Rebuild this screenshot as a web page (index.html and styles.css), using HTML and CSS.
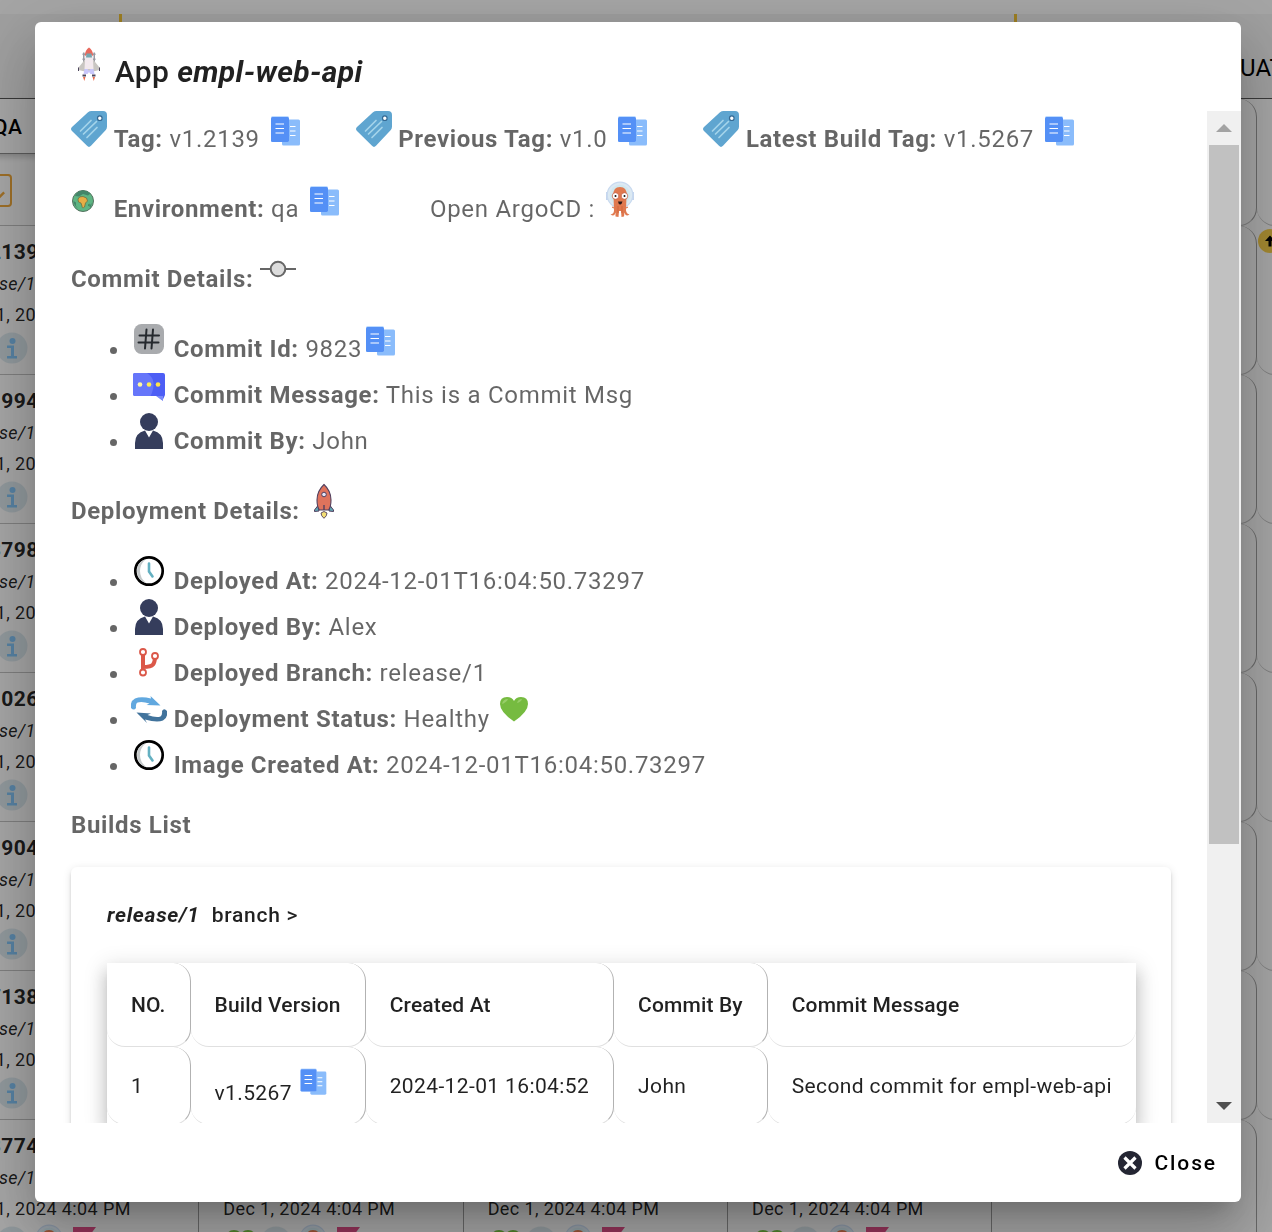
FILE: index.html
```html
<!DOCTYPE html>
<html lang="en">
<head>
<meta charset="utf-8">
<meta name="viewport" content="width=device-width, initial-scale=1">
<title>App empl-web-api</title>
<link rel="stylesheet" href="styles.css">
</head>
<body>
<svg class="sprite" aria-hidden="true">
  <symbol id="tag" viewBox="0 0 36 36">
    <path fill="#5fa5d0" d="M17 1.200Q18.500 0 20.500 0H32Q36 0 36 4V15.500Q36 17.500 34.800 19L20 34.800Q18 37 16 34.800L1 20Q-1 18 1 16Z"/>
    <circle cx="28.800" cy="7.200" r="2.300" fill="#fff" stroke="#356a94" stroke-width="1.200"/>
    <path stroke="#a4d4ea" stroke-width="1.700" stroke-linecap="round" d="M9.500 20 20 9.500M12.500 23 25.500 10.500M16 26.500 26 16.500"/>
  </symbol>
  <symbol id="copy" viewBox="0 0 36 36">
    <rect x="15" y="8.500" width="18" height="26" rx="1.500" fill="#8abcfb"/>
    <rect x="4" y="5" width="18" height="26" rx="1.500" fill="#bfdcff"/>
    <rect x="4" y="6" width="18" height="25" rx="1.500" fill="#5490f6"/>
    <path stroke="#fff" stroke-width="1.200" d="M8.500 13H17M8.500 17.500H17M8.500 22H17M23 15.500H28.500M23 20H28.500M23 24.500H28.500"/>
  </symbol>
  <symbol id="shuttle" viewBox="0 0 36 36">
    <path fill="#9a9aa4" d="M12 6.500h1.500v14H12zM22.500 6.500H24v14h-1.500zM11.500 7.500h3v1.500h-3zM21.500 7.500h3v1.500h-3zM11.500 12.500h3v1.500h-3zM21.500 12.500h3v1.500h-3z"/>
    <path fill="#c9c6c2" d="M14 13.500 7.500 21.500v2.500L16 26h4l8.500-2V21.500L22 13.500Z"/>
    <path fill="#f3e9ee" d="M14.300 9Q14.300 4 18 1.500 21.700 4 21.700 9L22.500 23h-9Z"/>
    <path fill="#e8695d" d="M13.800 10Q14 4 18 1.500 22 4 22.200 10Q18 7.500 13.800 10Z"/>
    <path fill="#75a6b0" d="M15.500 7.500h5l.5 4h-6z"/>
    <path fill="#c9c7fb" d="M13.500 23h3l1.500 2 1.500-2h3l1 5h-4L18 26l-1.500 2h-4z"/>
    <path fill="#4c455c" d="M7 21.500h1V25H7zM28 21.500h1V25h-1zM11.500 28.500h3.500v2h-3.500zM21 28.500h3.500v2H21z"/>
    <path fill="#ea6d50" d="M12 31h2.500l-1.200 4zM21.500 31H24l-1.200 4z"/>
  </symbol>
  <symbol id="globe" viewBox="0 0 36 36">
    <circle cx="12" cy="20" r="10.500" fill="#5eb583" stroke="#55725f" stroke-width="1"/>
    <path fill="#438669" d="M8 10.500Q14 8 19.500 12.500L17 14.500 12 13 8 15.500 4 15Q5 12 8 10.500ZM2.500 20 5 21.500 5 25 7 27.500Q3 25 2.500 20ZM19 24l2-2-2 6z"/>
    <path fill="#e7ae45" stroke="#6d6539" stroke-width=".7" d="M7 18Q8 15 12 15.500L15.500 17 16.500 20 14.500 22 13.500 26Q11 28 11 25L10 22Q6.500 22 7 18Z"/>
    <path fill="#33704f" d="M17 24l1.500-1.500v3.500z"/>
  </symbol>
  <symbol id="argo" viewBox="0 0 36 36">
    <path fill="#c5d6ee" d="M4 11h3v8H4zM29 11h3v8h-3z"/>
    <circle cx="18" cy="14" r="12.800" fill="#dce9f3" stroke="#c8d9ef" stroke-width="1.200"/>
    <circle cx="18" cy="14" r="10.300" fill="#d0e7ee"/>
    <path fill="#e0794f" d="M11.500 14Q11 6 18 6T24.500 14L24 29.500Q24.500 33 27.500 33.500 23.500 36 22.500 31.500L22 35.500 19.500 36 19 30H17L16.500 36 13.500 35.500 13.500 31.500Q12.500 36 8.500 33.500 12 33 12 29.500Z"/>
    <path stroke="#d2673d" fill="none" d="M12 27 10 26M24 27l2-1M16 25v7M20 25v7"/>
    <circle cx="13.500" cy="15" r="3.300" fill="#fff" stroke="#bd5536" stroke-width=".7"/>
    <circle cx="22.500" cy="15" r="3.300" fill="#fff" stroke="#bd5536" stroke-width=".7"/>
    <circle cx="13.500" cy="15" r="1" fill="#111"/><circle cx="22.500" cy="15" r="1" fill="#111"/>
    <path fill="#2b1a1a" d="M16 20.500h4.500Q19.500 24 18 23.500 16.500 23.500 16 20.500Z"/>
  </symbol>
  <symbol id="commit" viewBox="0 0 36 36">
    <path stroke="#666" stroke-width="2" d="M0 18h36"/>
    <circle cx="18" cy="18" r="7.300" fill="#dcdcdc" stroke="#666" stroke-width="2"/>
  </symbol>
  <symbol id="hash" viewBox="0 0 36 36">
    <rect x="3" y="3" width="30" height="30" rx="7.500" fill="#a9abae"/>
    <path stroke="#25292e" stroke-width="2" stroke-linecap="round" d="M15.500 8.500 14 27.500M22 8.500 20.500 27.500M8.500 14.500H28M7.500 21.500H27.500"/>
  </symbol>
  <symbol id="chat" viewBox="0 0 36 36">
    <path fill="#4d5ef5" d="M4 6H32Q34 6 34 8V28L31.500 33.500 26 29H4Q2 29 2 27V8Q2 6 4 6Z"/>
    <path fill="#6676fa" d="M4 6H16Q22 10 22.500 16T19.500 29H4Q2 29 2 27V8Q2 6 4 6Z"/>
    <path fill="#7a8afa" d="M25 29h7v5z"/>
    <circle cx="9" cy="17.500" r="2.300" fill="#fff7a0"/><circle cx="18" cy="17.500" r="2.300" fill="#ffee52"/><circle cx="27" cy="17.500" r="2.300" fill="#ffe24a"/>
  </symbol>
  <symbol id="person" viewBox="0 0 36 36">
    <circle cx="18" cy="9" r="9" fill="#353d5c"/>
    <path fill="#353d5c" d="M4 36V30Q4 20 14 17.500L18 24.500 22 17.500Q32 20 32 30V36Z"/>
  </symbol>
  <symbol id="rocket" viewBox="0 0 36 36">
    <path fill="#62a7b5" stroke="#51405f" stroke-width="1" d="M12 22.500 8.500 27V28.500L13 28ZM24 22.500 27.500 27V28.500L23 28Z"/>
    <path fill="#df735c" stroke="#51405f" stroke-width="1.100" d="M18 1.500Q11 8 11 17 11 24 13.500 27H22.500Q25 24 25 17 25 8 18 1.500Z"/>
    <circle cx="18" cy="11.500" r="2.300" fill="#e5e5f5" stroke="#51405f"/>
    <path stroke="#51405f" stroke-width="1.400" d="M18 22v5"/>
    <path fill="#f3df75" stroke="#51405f" stroke-width=".9" d="M15 30Q18 27 21 30 21 33 18 35.300 15 33 15 30Z"/>
  </symbol>
  <symbol id="clock" viewBox="0 0 36 36">
    <circle cx="18" cy="18" r="13.700" fill="#fff" stroke="#000" stroke-width="2.700"/>
    <path fill="#c5c9ca" d="M15 6Q6 9 6 18T15 30Q9 25 9 18T15 6Z"/>
    <path fill="none" stroke="#64b0c1" stroke-width="2.600" stroke-linecap="round" d="M18 10.500v8l3.500 5"/>
  </symbol>
  <symbol id="branch" viewBox="0 0 36 36">
    <path fill="none" stroke="#db5849" stroke-width="4" d="M12 8V24M12 22Q20 22 22 19.500 23.500 18 24 13"/>
    <circle cx="12" cy="7" r="3" fill="#fff" stroke="#db5849" stroke-width="1.800"/>
    <circle cx="24" cy="11" r="3" fill="#fff" stroke="#db5849" stroke-width="1.800"/>
    <circle cx="12" cy="27.500" r="3" fill="#fff" stroke="#db5849" stroke-width="1.800"/>
  </symbol>
  <symbol id="sync" viewBox="0 0 36 36">
    <path fill="#61a8df" d="M0 17Q-1 10 4 7.500 10 5 20 7.500L19.500 5 29.500 14.500 15.500 14 18.500 12.500Q11 10 6.500 11.500 4.500 12.500 5 17 3 20 0 17Z"/>
    <path fill="#41739c" d="M36 20Q37 27 32 29.500 26 32 14 28.500L16 32 5.500 21.500 20 22.500 16.500 24Q25 27 29.500 25.500 31.500 24 31 20 33 16.500 36 20Z"/>
  </symbol>
  <symbol id="heart" viewBox="0 0 36 36">
    <path fill="#76bb40" d="M18 30.500Q4 21 4 13 4 6 11 6 16 6 18 10 20 6 25 6 32 6 32 13 32 21 18 30.500Z"/>
    <path fill="#98ce69" d="M6 13Q7 8 12 8 11 11 6 13ZM21 12Q22 8 26 8 25 11 21 12Z"/>
  </symbol>
  <symbol id="info" viewBox="0 0 36 36">
    <circle cx="17" cy="18" r="15.500" fill="#d5e1e7"/>
    <circle cx="17.500" cy="11" r="3" fill="#7fbff0"/>
    <path fill="#7fbff0" d="M12 15.500h7v10.500h3v2.500H12V26h4v-8h-4z"/>
  </symbol>
  <symbol id="flag" viewBox="0 0 36 36"><path fill="#d94a82" d="M6 3H29L23 11 29 19H6Z"/></symbol>
  <symbol id="close" viewBox="0 0 24 24">
    <circle cx="12" cy="12" r="12" fill="#242633"/>
    <path stroke="#fff" stroke-width="3.200" d="M6.500 6.500l11 11M17.500 6.500l-11 11"/>
  </symbol>
</svg>

<main class="board">
  <div class="groups">
    <div class="group group-first"></div>
    <div class="group group-wide"></div>
    <div class="group group-last">UAT</div>
  </div>
  <table class="envs">
    <thead>
      <tr class="env-row">
        <th><div class="env-name">QA</div><button class="filter" aria-label="Filter"><svg viewBox="0 0 24 24"><path d="m9 14 5 5 5-5"/></svg></button></th>
        <th></th><th></th><th></th><th></th><th></th>
      </tr>
    </thead>
    <tbody>
      <tr><td><b>v1.2139</b><i>release/1</i><span>Dec 1, 2024</span><div class="icons"><svg><use href="#heart"/></svg><svg><use href="#info"/></svg></div></td><td></td><td></td><td></td><td></td><td><span class="badge"><svg viewBox="0 0 24 24"><path d="M12 6.500 17 12h-3.500v5.500h-3V12H7z"/></svg></span></td></tr>
      <tr><td><b>v1.1994</b><i>release/1</i><span>Dec 1, 2024</span><div class="icons"><svg><use href="#heart"/></svg><svg><use href="#info"/></svg></div></td><td></td><td></td><td></td><td></td><td></td></tr>
      <tr><td><b>v1.3798</b><i>release/1</i><span>Dec 1, 2024</span><div class="icons"><svg><use href="#heart"/></svg><svg><use href="#info"/></svg></div></td><td></td><td></td><td></td><td></td><td></td></tr>
      <tr><td><b>v1.1026</b><i>release/1</i><span>Dec 1, 2024</span><div class="icons"><svg><use href="#heart"/></svg><svg><use href="#info"/></svg></div></td><td></td><td></td><td></td><td></td><td></td></tr>
      <tr><td><b>v1.1904</b><i>release/1</i><span>Dec 1, 2024</span><div class="icons"><svg><use href="#heart"/></svg><svg><use href="#info"/></svg></div></td><td></td><td></td><td></td><td></td><td></td></tr>
      <tr><td><b>v1.7138</b><i>release/1</i><span>Dec 1, 2024</span><div class="icons"><svg><use href="#heart"/></svg><svg><use href="#info"/></svg></div></td><td></td><td></td><td></td><td></td><td></td></tr>
      <tr>
        <td><b>v1.3774</b><i>release/1</i><span>Dec 1, 2024 4:04 PM</span><div class="icons"><svg><use href="#heart"/></svg><svg><use href="#info"/></svg><svg><use href="#argo"/></svg><svg><use href="#flag"/></svg></div></td>
        <td><b>v1.3774</b><i>release/1</i><span>Dec 1, 2024 4:04 PM</span><div class="icons"><svg><use href="#heart"/></svg><svg><use href="#info"/></svg><svg><use href="#argo"/></svg><svg><use href="#flag"/></svg></div></td>
        <td><b>v1.3774</b><i>release/1</i><span>Dec 1, 2024 4:04 PM</span><div class="icons"><svg><use href="#heart"/></svg><svg><use href="#info"/></svg><svg><use href="#argo"/></svg><svg><use href="#flag"/></svg></div></td>
        <td><b>v1.3774</b><i>release/1</i><span>Dec 1, 2024 4:04 PM</span><div class="icons"><svg><use href="#heart"/></svg><svg><use href="#info"/></svg><svg><use href="#argo"/></svg><svg><use href="#flag"/></svg></div></td>
        <td></td><td></td>
      </tr>
    </tbody>
  </table>
</main>

<div class="overlay">
  <section class="dialog" role="dialog" aria-modal="true" aria-labelledby="dialog-title">
    <h1 class="title" id="dialog-title"><svg class="icon"><use href="#shuttle"/></svg> App <em>empl-web-api</em></h1>
    <div class="scroller">
      <div class="content">
        <div class="facts">
          <span><svg class="icon"><use href="#tag"/></svg> <strong>Tag:</strong> v1.2139 <svg class="icon"><use href="#copy"/></svg></span>
          <span><svg class="icon"><use href="#tag"/></svg> <strong>Previous Tag:</strong> v1.0 <svg class="icon"><use href="#copy"/></svg></span>
          <span><svg class="icon"><use href="#tag"/></svg> <strong>Latest Build Tag:</strong> v1.5267 <svg class="icon"><use href="#copy"/></svg></span>
        </div>
        <div class="facts facts-wide">
          <span><svg class="icon"><use href="#globe"/></svg> <strong>Environment:</strong> qa <svg class="icon"><use href="#copy"/></svg></span>
          <span>Open ArgoCD : <svg class="icon"><use href="#argo"/></svg></span>
        </div>
        <p><strong>Commit Details:</strong> <svg class="icon"><use href="#commit"/></svg></p>
        <ul>
          <li><svg class="icon"><use href="#hash"/></svg> <strong>Commit Id:</strong> 9823<svg class="icon"><use href="#copy"/></svg></li>
          <li><svg class="icon"><use href="#chat"/></svg> <strong>Commit Message:</strong> This is a Commit Msg</li>
          <li><svg class="icon"><use href="#person"/></svg> <strong>Commit By:</strong> John</li>
        </ul>
        <p><strong>Deployment Details:</strong> <svg class="icon"><use href="#rocket"/></svg></p>
        <ul>
          <li><svg class="icon"><use href="#clock"/></svg> <strong>Deployed At:</strong> 2024-12-01T16:04:50.73297</li>
          <li><svg class="icon"><use href="#person"/></svg> <strong>Deployed By:</strong> Alex</li>
          <li><svg class="icon"><use href="#branch"/></svg> <strong>Deployed Branch:</strong> release/1</li>
          <li><svg class="icon"><use href="#sync"/></svg> <strong>Deployment Status:</strong> Healthy <svg class="icon"><use href="#heart"/></svg></li>
          <li><svg class="icon"><use href="#clock"/></svg> <strong>Image Created At:</strong> 2024-12-01T16:04:50.73297</li>
        </ul>
        <p><strong>Builds List</strong></p>
        <div class="panel">
          <h2 class="panel-title"><em>release/1</em> branch &gt;</h2>
          <table class="builds">
            <thead><tr><th>NO.</th><th>Build Version</th><th>Created At</th><th>Commit By</th><th>Commit Message</th></tr></thead>
            <tbody>
              <tr><td>1</td><td>v1.5267 <svg class="icon icon-small"><use href="#copy"/></svg></td><td>2024-12-01 16:04:52</td><td>John</td><td>Second commit for empl-web-api</td></tr>
            </tbody>
          </table>
        </div>
      </div>
      <div class="scrollbar">
        <button class="arrow arrow-up" aria-label="Scroll up"></button>
        <div class="track"><div class="thumb"></div></div>
        <button class="arrow arrow-down" aria-label="Scroll down"></button>
      </div>
    </div>
    <div class="actions">
      <button class="close"><svg><use href="#close"/></svg>Close</button>
    </div>
  </section>
</div>
</body>
</html>
```

FILE: styles.css
```css
* { box-sizing: border-box; }
html, body { height: 100%; }
body {
  margin: 0;
  overflow: hidden;
  background: #fff;
  color: rgba(0, 0, 0, .87);
  font-family: Roboto, "Liberation Sans", sans-serif;
}
button { border: 0; padding: 0; background: none; font: inherit; color: inherit; }
.sprite { display: none; }

/* Environments board, scrolled sideways behind the dialog */
.board { margin-left: -65px; padding-top: 14px; background: #f4f4f4; overflow: hidden; }
.groups {
  display: flex;
  width: 1586px;
  height: 85px;
  background: #eaeaea;
  border-bottom: 1px solid #555;
}
.group { font-size: 24px; line-height: 108px; text-align: center; color: #000; }
.group-first { width: 184px; }
.group-wide { width: 895px; border-left: 3px solid #eabc33; }
.group-last { width: 493px; border-left: 3px solid #eabc33; }
.envs {
  width: 1586px;
  table-layout: fixed;
  border-collapse: separate;
  border-spacing: 0;
  font-size: 21px;
  letter-spacing: .018em;
}
.envs th, .envs td {
  position: relative;
  height: 149px;
  padding: 11px 24px 6px;
  vertical-align: top;
  text-align: left;
  border-right: 1px solid #999;
  border-bottom: 1px solid #bbb;
  border-radius: 0 18px 18px 18px;
}
.envs th:first-child, .envs td:first-child { border-radius: 0; }
.envs th { height: 127px; padding: 0; }
.env-name {
  height: 55px;
  line-height: 56px;
  padding-right: 118px;
  text-align: center;
  font-weight: 500;
  color: #000;
  border-bottom: 1px solid #888;
  box-shadow: 0 3px 6px rgba(0, 0, 0, .2);
}
.filter {
  display: block;
  width: 32px;
  height: 33px;
  margin: 20px 0 0 45px;
  border: 2px solid #e8a33a;
  border-radius: 4px;
}
.filter path { fill: none; stroke: #e8a33a; stroke-width: 2; }
.envs b, .envs i, .envs span { display: block; line-height: 31px; white-space: nowrap; }
.envs i, .envs span { font-size: 18px; }
.icons { display: flex; }
.icons svg { width: 36px; height: 36px; }
.envs .badge {
  position: absolute;
  top: 3px;
  left: 1px;
  width: 24px;
  height: 24px;
  border-radius: 50%;
  background: #f0c848;
}
.badge svg { display: block; }

/* Dialog */
.overlay {
  position: fixed;
  inset: 0;
  display: flex;
  padding: 22px 31px 30px 35px;
  background: rgba(0, 0, 0, .32);
}
.dialog {
  flex: 1;
  min-width: 0;
  display: flex;
  flex-direction: column;
  background: #fff;
  border-radius: 6px;
  box-shadow: 0 17px 23px -11px rgba(0, 0, 0, .2), 0 36px 57px 5px rgba(0, 0, 0, .14), 0 14px 69px 12px rgba(0, 0, 0, .12);
}
.dialog em { font-weight: 700; }
.icon { width: 36px; height: 36px; vertical-align: baseline; }
.title {
  margin: 0;
  padding: 24px 36px 15px;
  font-size: 30px;
  font-weight: 500;
  line-height: 48px;
  letter-spacing: .0125em;
}
.scroller { flex: 1; min-height: 0; display: flex; }
.content {
  flex: 1;
  min-width: 0;
  overflow: hidden;
  padding: 0 36px;
  color: rgba(0, 0, 0, .6);
  font-size: 24px;
  line-height: 36px;
  letter-spacing: .03em;
}
.content strong { letter-spacing: .027em; }
.content p, .content ul, .facts { margin: 0 0 24px; }
.content ul { padding-left: 60px; }
.facts { display: flex; gap: 53px; white-space: nowrap; }
.facts-wide { gap: 88px; }
.panel {
  padding: 0 36px 24px;
  border-radius: 6px;
  color: rgba(0, 0, 0, .87);
  box-shadow: 0 5px 2px -3px rgba(0, 0, 0, .2), 0 3px 3px rgba(0, 0, 0, .14), 0 2px 8px rgba(0, 0, 0, .12);
}
.panel-title {
  display: flex;
  gap: 12px;
  margin: 0;
  font-size: 21px;
  font-weight: 500;
  line-height: 96px;
}
.builds {
  width: 100%;
  border-collapse: separate;
  border-spacing: 0;
  background: #fff;
  font-size: 21px;
  line-height: 30px;
  letter-spacing: .018em;
  white-space: nowrap;
  box-shadow: 0 8px 8px -5px rgba(0, 0, 0, .2), 0 12px 15px 2px rgba(0, 0, 0, .14), 0 5px 21px 3px rgba(0, 0, 0, .12);
}
.builds th, .builds td {
  height: 78px;
  padding: 0 24px;
  text-align: left;
  border-right: 1px solid rgba(0, 0, 0, .3);
  border-bottom: 1px solid rgba(0, 0, 0, .12);
  border-radius: 18px;
}
.builds th { height: 84px; font-weight: 500; letter-spacing: .007em; }
.builds th:last-child, .builds td:last-child { border-right: 0; }
.icon-small { width: 32px; height: 32px; margin-bottom: 4px; }

.scrollbar { width: 34px; display: flex; flex-direction: column; background: #f0f0f0; }
.arrow { height: 34px; display: flex; align-items: center; justify-content: center; }
.arrow::before { content: ""; border: 8px solid transparent; }
.arrow-up::before { border-top: 0; border-bottom-color: #a3a3a3; }
.arrow-down::before { border-bottom: 0; border-top-color: #505050; }
.track { flex: 1; padding: 0 2px; }
.thumb { height: 74%; background: #c1c1c1; }

.actions { display: flex; align-items: center; justify-content: flex-end; height: 79px; padding: 0 12px; }
.close {
  display: flex;
  align-items: center;
  gap: 13px;
  height: 54px;
  padding: 0 12px;
  color: #000;
  font-size: 21px;
  font-weight: 500;
  letter-spacing: .09em;
}
.close svg { width: 24px; height: 24px; }
```
